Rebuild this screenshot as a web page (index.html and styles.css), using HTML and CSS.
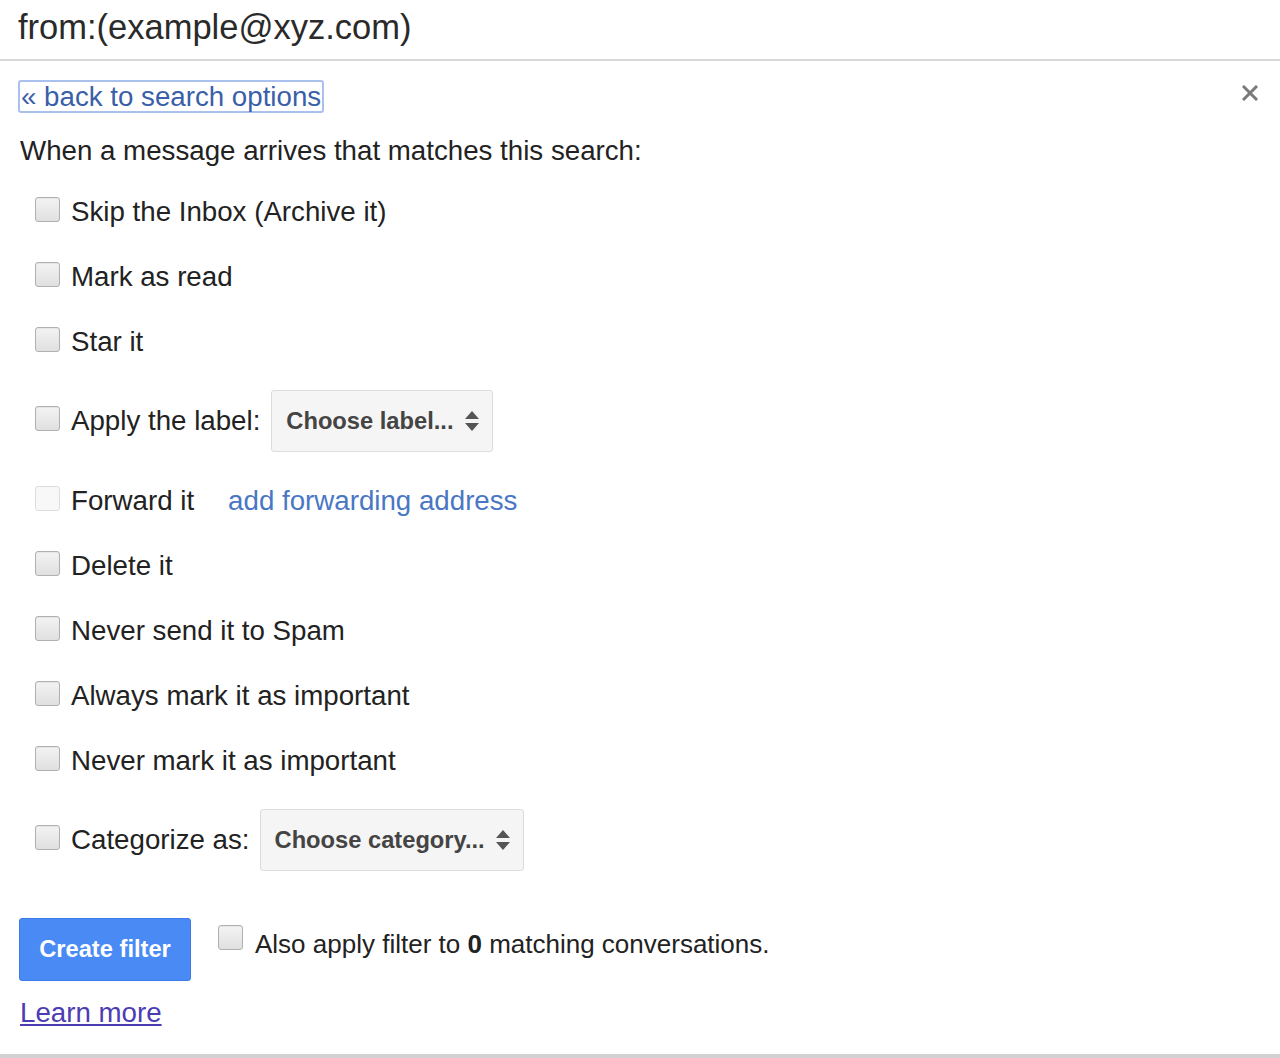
FILE: index.html
```html
<!DOCTYPE html>
<html lang="en">
<head>
<meta charset="utf-8">
<title>Create filter</title>
<link rel="stylesheet" href="styles.css">
</head>
<body>
<div class="search">from:(example@xyz.com)</div>
<div class="panel">
  <div class="top">
    <a class="back" href="#">« back to search options</a>
    <button class="close" aria-label="Close">
      <svg width="16" height="16" viewBox="0 0 16 16"><path d="M2 2 L14 14 M14 2 L2 14" stroke="#7a7a7a" stroke-width="3" stroke-linecap="square" fill="none"/></svg>
    </button>
  </div>
  <p class="intro">When a message arrives that matches this search:</p>
  <ul class="options">
    <li class="opt"><input type="checkbox" class="cb"><span>Skip the Inbox (Archive it)</span></li>
    <li class="opt"><input type="checkbox" class="cb"><span>Mark as read</span></li>
    <li class="opt"><input type="checkbox" class="cb"><span>Star it</span></li>
    <li class="opt tall"><input type="checkbox" class="cb"><span>Apply the label:</span>
      <span class="select">Choose label...<svg class="arrows" width="16" height="24" viewBox="0 0 16 24"><path d="M8 2 L15 10 L1 10 Z M1 14 L15 14 L8 22 Z" fill="#555"/></svg></span>
    </li>
    <li class="opt"><input type="checkbox" class="cb" disabled><span>Forward it</span><a class="fwd" href="#">add forwarding address</a></li>
    <li class="opt"><input type="checkbox" class="cb"><span>Delete it</span></li>
    <li class="opt"><input type="checkbox" class="cb"><span>Never send it to Spam</span></li>
    <li class="opt"><input type="checkbox" class="cb"><span>Always mark it as important</span></li>
    <li class="opt"><input type="checkbox" class="cb"><span>Never mark it as important</span></li>
    <li class="opt tall"><input type="checkbox" class="cb"><span>Categorize as:</span>
      <span class="select cat">Choose category...<svg class="arrows" width="16" height="24" viewBox="0 0 16 24"><path d="M8 2 L15 10 L1 10 Z M1 14 L15 14 L8 22 Z" fill="#555"/></svg></span>
    </li>
  </ul>
  <div class="actions">
    <button class="create">Create filter</button>
    <label class="also"><input type="checkbox" class="cb"><span class="also-text">Also apply filter to <b>0</b> matching conversations.</span></label>
  </div>
  <a class="learn" href="#">Learn more</a>
</div>
</body>
</html>
```

FILE: styles.css
```css
html, body {
  margin: 0;
  padding: 0;
  background: #fff;
}
body {
  font-family: "Liberation Sans", Arial, sans-serif;
  color: #222;
  height: 1058px;
  overflow: hidden;
}
.search {
  height: 59px;
  line-height: 54px;
  padding-left: 18px;
  font-size: 34.5px;
  color: #2a2a2a;
  border-bottom: 2px solid #d8d8d8;
}
.panel {
  box-sizing: border-box;
  height: 997px;
  padding: 19px 22px 0 18px;
  border-bottom: 4px solid #d2d2d2;
}
.top {
  display: flex;
  justify-content: space-between;
  align-items: flex-start;
  height: 33px;
}
.back {
  font-size: 27.7px;
  line-height: 29px;
  color: #3a5fa8;
  text-decoration: none;
  border: 2px solid #a9c1ec;
  border-radius: 3px;
  padding: 0 1px;
}
.close {
  margin-top: 5px;
  padding: 0;
  border: 0;
  background: none;
  width: 16px;
  height: 16px;
  display: block;
}
.close svg { display: block; }
.intro {
  margin: 21px 0 0 2px;
  font-size: 27.7px;
  line-height: 34px;
}
.options {
  list-style: none;
  margin: 11px 0 0;
  padding: 0 0 0 17px;
}
.opt {
  display: flex;
  align-items: center;
  height: 65px;
  font-size: 27.7px;
}
.opt.tall { height: 94px; }
.cb {
  appearance: none;
  -webkit-appearance: none;
  flex: none;
  box-sizing: border-box;
  width: 25px;
  height: 25px;
  margin: 0 11px 5px 0;
  border: 1px solid #b0b0b0;
  border-radius: 3px;
  background: linear-gradient(#f3f3f3, #e0e0e0);
  box-shadow: inset 0 1px 1px rgba(0,0,0,0.06);
}
.cb:disabled {
  border-color: #dedede;
  background: #f8f8f8;
  box-shadow: none;
}
.select {
  display: inline-flex;
  align-items: center;
  gap: 10px;
  box-sizing: border-box;
  height: 62px;
  margin-left: 11px;
  padding: 0 12px 0 14px;
  background: #f5f5f5;
  border: 1px solid #dcdcdc;
  border-radius: 3px;
  font-size: 23.7px;
  font-weight: bold;
  color: #444;
}
.select.cat { margin-left: 10px; }
.arrows { display: block; }
.fwd {
  margin-left: 34px;
  color: #4a77c4;
  text-decoration: none;
}
.actions {
  display: flex;
  align-items: flex-start;
  margin-top: 31px;
  padding-left: 1px;
}
.create {
  box-sizing: border-box;
  width: 172px;
  height: 63px;
  padding: 0;
  background: #4a8af4;
  border: 1px solid #3b7be8;
  border-radius: 3px;
  color: #fff;
  font-family: "Liberation Sans", Arial, sans-serif;
  font-size: 23.7px;
  font-weight: bold;
}
.also {
  display: flex;
  align-items: flex-start;
  margin-left: 27px;
}
.also .cb {
  margin: 7px 12px 0 0;
}
.also-text {
  margin-top: 9px;
  font-size: 26px;
  line-height: 34px;
}
.learn {
  display: inline-block;
  margin: 15px 0 0 2px;
  font-size: 27.7px;
  line-height: 34px;
  color: #4b3cb4;
  text-decoration: underline;
}
```
